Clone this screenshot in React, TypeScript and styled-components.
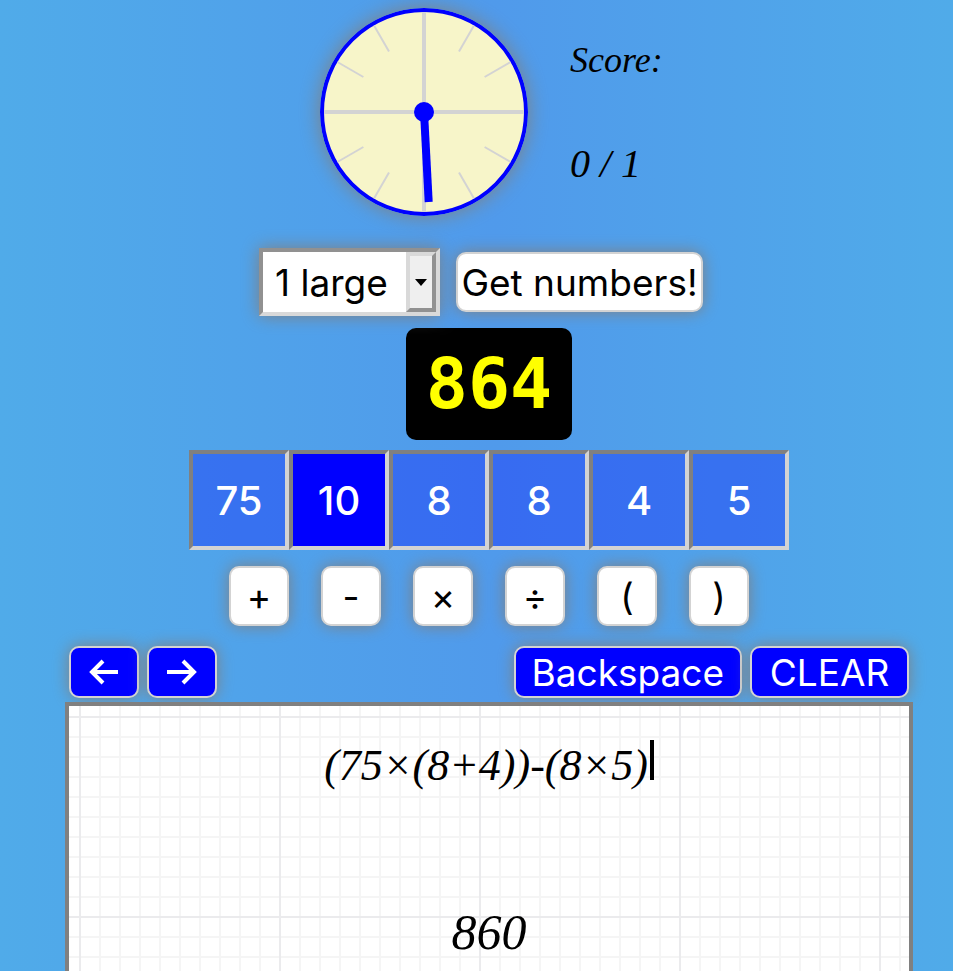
import React from "react";
import styled, { createGlobalStyle, css } from "styled-components";

const sans = '"Inter", "Liberation Sans", sans-serif';
const script = '"Liberation Serif", serif';

const GlobalStyle = createGlobalStyle`
  *, *::before, *::after { box-sizing: border-box; }
  body {
    margin: 0;
    background: linear-gradient(to right, #50abe9, #509aeb 52%, #50abe9);
    font-family: ${sans};
    font-size: 40px;
    color: #000;
  }
`;

const Page = styled.main`
  display: flex;
  flex-direction: column;
  align-items: center;
  min-height: 100vh;
  padding: 8px 40px 0 65px;
`;

const Header = styled.header`
  display: flex;
  justify-content: center;
  gap: 42px;
`;

const Clock = styled.svg`
  width: 208px;
  height: 208px;
  border-radius: 50%;
  box-shadow: 0 0 20px gray;
`;

const Score = styled.section`
  display: flex;
  flex-direction: column;
  gap: 56px;
  width: 88px;
  padding-top: 28px;
  font-family: ${script};
  font-style: italic;
  line-height: 48px;
  white-space: nowrap;
`;

const ScoreLabel = styled.span`
  font-size: 36px;
`;

const ScoreValue = styled.span`
  font-size: 40px;
`;

const Setup = styled.form`
  display: flex;
  align-items: center;
  gap: 16px;
  margin-top: 32px;
  padding-right: 16px;
`;

const SelectFrame = styled.div`
  position: relative;
  width: 181px;
  height: 68px;
  border: 4px solid;
  border-color: #919191 #d9d9d9 #d9d9d9 #919191;
  box-shadow: 0 0 16px gray;
`;

const Select = styled.select`
  appearance: none;
  width: 100%;
  height: 100%;
  padding: 0 34px 0 12px;
  border: 0;
  border-radius: 0;
  background: #fff;
  color: #000;
  font: 400 37px ${sans};
`;

const SelectArrow = styled.span`
  position: absolute;
  inset: 0 0 0 auto;
  display: flex;
  align-items: center;
  justify-content: center;
  width: 30px;
  border: 4px solid;
  border-color: #d9d9d9 #919191 #919191 #d9d9d9;
  background: #efefef;
  pointer-events: none;
`;

const Button = styled.button<{ $kind: "light" | "key" | "dark" }>`
  display: flex;
  align-items: center;
  justify-content: center;
  padding: 0;
  border: 2px solid lightgray;
  border-radius: 10px;
  background: #fff;
  color: #000;
  font: 400 37px ${sans};
  white-space: nowrap;
  box-shadow: 0 0 16px gray;
  ${(p) => p.$kind === "light" && css`width: 247px; height: 60px;`}
  ${(p) => p.$kind === "key" && css`width: 60px; height: 60px;`}
  ${(p) => p.$kind === "dark" && css`
    height: 52px;
    padding: 0 16px;
    background: blue;
    color: #fff;
  `}
`;

const ClearButton = styled(Button)`
  min-width: 159px;
`;

const Target = styled.output`
  display: flex;
  align-items: center;
  justify-content: center;
  width: 166px;
  height: 112px;
  margin-top: 12px;
  border-radius: 10px;
  background: #000;
  color: yellow;
  font: bold 70px "DejaVu Sans Mono", monospace;
`;

const Tiles = styled.div`
  display: grid;
  grid-template-columns: repeat(6, 100px);
  margin-top: 10px;
`;

const Tile = styled.button<{ $selected: boolean }>`
  height: 100px;
  padding: 0;
  border: 4px solid;
  border-color: gray lightgray lightgray gray;
  background: ${(p) => (p.$selected ? "blue" : "rgba(0, 0, 255, 0.3)")};
  background-clip: padding-box;
  color: #fff;
  font: 500 40px ${sans};
`;

const Keys = styled.div`
  display: flex;
  gap: 32px;
  margin-top: 16px;
`;

const Toolbar = styled.div`
  display: flex;
  align-self: stretch;
  gap: 8px;
  margin-top: 20px;
  padding: 0 4px;
`;

const Spacer = styled.div`
  flex: 1;
`;

const Paper = styled.section`
  position: relative;
  display: flex;
  flex: 1;
  flex-direction: column;
  align-self: stretch;
  align-items: center;
  gap: 104px;
  margin-top: 4px;
  padding-top: 28px;
  border: 4px solid gray;
  border-bottom: 0;
  background-color: #fff;
  background-image:
    linear-gradient(#ebebed 2px, transparent 2px),
    linear-gradient(90deg, #ebebed 2px, transparent 2px),
    linear-gradient(#f5f5f5 2px, transparent 2px),
    linear-gradient(90deg, #f5f5f5 2px, transparent 2px);
  background-size: 200px 200px, 200px 200px, 20px 20px, 20px 20px;
  background-position: 10px 10px;
  font-family: ${script};
  font-style: italic;
`;

const Expression = styled.div`
  display: flex;
  align-items: center;
  font-size: 44px;
  line-height: 64px;
`;

const Caret = styled.span`
  width: 4px;
  height: 40px;
  margin: 0 0 12px 2px;
  background: #000;
`;

const Result = styled.output`
  font-size: 50px;
  line-height: 60px;
`;

const ticks = [30, 60, 120, 150, 210, 240, 300, 330];
const numbers = [75, 10, 8, 8, 4, 5];
const operators = ["+", "-", "×", "÷", "(", ")"];

function ArrowIcon({ left = false }: { left?: boolean }) {
  return (
    <svg width="34" height="28" viewBox="0 0 34 28" fill="none" stroke="currentColor" strokeWidth="4" aria-hidden="true">
      <path d={left ? "M31 14H4M16 3L5 14L16 25" : "M2 14H30M18 3L29 14L18 25"} />
    </svg>
  );
}

export default function App() {
  return (
    <>
      <GlobalStyle />
      <Page>
        <Header>
          <Clock viewBox="-104 -104 208 208" role="img" aria-label="Timer">
            <circle r="102" fill="#f7f5c9" stroke="blue" strokeWidth="4" />
            <g stroke="lightgray">
              <path d="M0-100V100M-100 0H100" strokeWidth="4" />
              {ticks.map((angle) => (
                <path key={angle} d="M0-70V-100" strokeWidth="2" transform={`rotate(${angle})`} />
              ))}
            </g>
            <path d="M0 0L4.7 90" stroke="blue" strokeWidth="8" />
            <circle r="10" fill="blue" />
          </Clock>
          <Score>
            <ScoreLabel>Score:</ScoreLabel>
            <ScoreValue>0 / 1</ScoreValue>
          </Score>
        </Header>
        <Setup onSubmit={(e) => e.preventDefault()}>
          <SelectFrame>
            <Select aria-label="Large numbers" defaultValue="1">
              <option value="1">1 large</option>
              <option value="2">2 large</option>
              <option value="3">3 large</option>
              <option value="4">4 large</option>
            </Select>
            <SelectArrow>
              <svg width="14" height="8" viewBox="0 0 14 8" aria-hidden="true">
                <path d="M1 1H13L7 8Z" />
              </svg>
            </SelectArrow>
          </SelectFrame>
          <Button $kind="light" type="submit">Get numbers!</Button>
        </Setup>
        <Target>864</Target>
        <Tiles>
          {numbers.map((n, i) => (
            <Tile key={i} type="button" $selected={i === 1}>{n}</Tile>
          ))}
        </Tiles>
        <Keys>
          {operators.map((op) => (
            <Button key={op} $kind="key" type="button">{op}</Button>
          ))}
        </Keys>
        <Toolbar>
          <Button $kind="dark" type="button" aria-label="Move left"><ArrowIcon left /></Button>
          <Button $kind="dark" type="button" aria-label="Move right"><ArrowIcon /></Button>
          <Spacer />
          <Button $kind="dark" type="button">Backspace</Button>
          <ClearButton $kind="dark" type="button">CLEAR</ClearButton>
        </Toolbar>
        <Paper>
          <Expression>(75×(8+4))-(8×5)<Caret /></Expression>
          <Result>860</Result>
        </Paper>
      </Page>
    </>
  );
}
